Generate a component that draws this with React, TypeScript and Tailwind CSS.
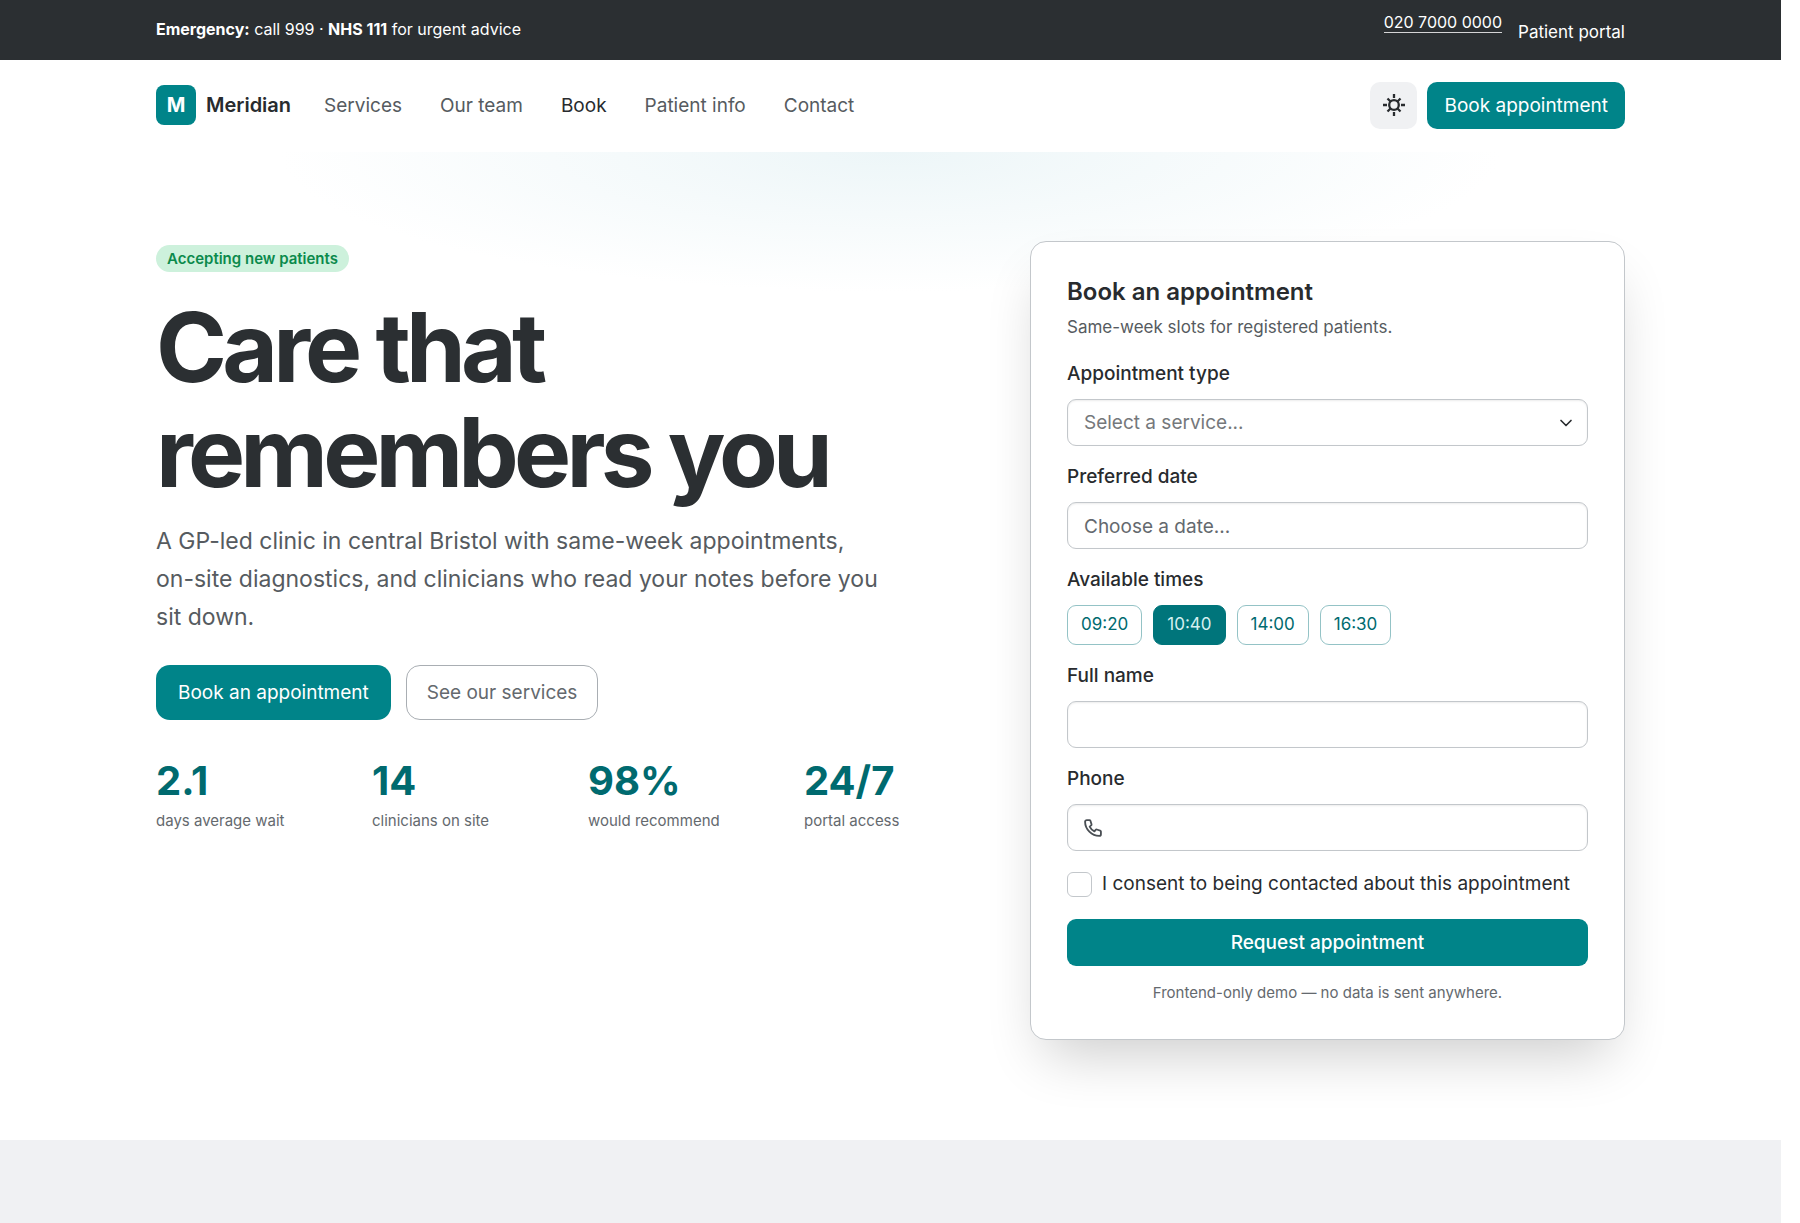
import { useState } from 'react';
import { ChevronDown } from 'lucide-react';

const NAV = ['Services', 'Our team', 'Book', 'Patient info', 'Contact'];
const TIMES = ['09:20', '10:40', '14:00', '16:30'];
const STATS = [
  { value: '2.1', label: 'days average wait' },
  { value: '14', label: 'clinicians on site' },
  { value: '98%', label: 'would recommend' },
  { value: '24/7', label: 'portal access' },
];

const FIELD =
  'h-[47px] w-full rounded-[9px] border border-[#c3c7cb] bg-white px-4 pt-[2px] text-[19px] shadow-[inset_0_1px_2px_rgba(0,0,0,0.08)] outline-none placeholder:text-[#64696e]';
const LABEL = 'block text-[19px] font-medium leading-[30px] text-[#282b2e]';

function SunIcon() {
  return (
    <svg viewBox="0 0 24 24" width="24" height="24" fill="none" stroke="currentColor" strokeWidth="2.3" aria-hidden="true">
      <circle cx="12" cy="12" r="4.8" />
      <path d="M12 1v4M12 19v4M1 12h4M19 12h4M5.500 5.500l3 3M15.500 15.500l3 3M18.500 5.500l-3 3M8.500 15.500l-3 3" />
    </svg>
  );
}

function PhoneIcon() {
  return (
    <svg viewBox="0 0 24 24" width="20" height="20" fill="none" stroke="currentColor" strokeWidth="2.2" strokeLinejoin="round" aria-hidden="true">
      <path d="M4.500 2.500h3.200a1.300 1.300 0 0 1 1.200.9l1.300 4a1.300 1.300 0 0 1-.4 1.400L8 10.300a12 12 0 0 0 5.700 5.700l1.500-1.800a1.300 1.300 0 0 1 1.400-.4l4 1.300a1.300 1.300 0 0 1 .9 1.200v3.200a2 2 0 0 1-2 2C10.500 21.500 2.500 13.500 2.500 4.500a2 2 0 0 1 2-2z" />
    </svg>
  );
}

function TopBar() {
  return (
    <div className="bg-[#2b2f32] text-white">
      <div className="mx-auto flex h-15 max-w-[1469px] items-center justify-between text-[16px]">
        <p className="pb-[2px]">
          <strong className="font-bold">Emergency:</strong> call 999 · <strong className="font-bold">NHS 111</strong> for urgent advice
        </p>
        <div className="flex h-9 items-start gap-4">
          <a href="tel:02070000000" className="border-b border-white/80 leading-5">020 7000 0000</a>
          <a href="#portal" className="text-[17px] leading-10">Patient portal</a>
        </div>
      </div>
    </div>
  );
}

function Header() {
  return (
    <header className="bg-white">
      <div className="mx-auto flex h-23 max-w-[1469px] items-center justify-between pb-[2px]">
        <div className="flex items-center gap-[33px]">
          <a href="#home" className="flex items-center gap-[10px] text-[20px] font-semibold text-[#282b2e]">
            <span className="flex size-10 items-center justify-center rounded-lg bg-[#008489] font-bold text-white">M</span>
            Meridian
          </a>
          <nav className="flex gap-[38px] pt-[2px] text-[19px]">
            {NAV.map((item) => (
              <a key={item} href="#nav" className={item === 'Book' ? 'text-[#282b2e]' : 'text-[#565b60]'}>{item}</a>
            ))}
          </nav>
        </div>
        <div className="flex items-center gap-[10px]">
          <button type="button" aria-label="Toggle theme" className="flex size-[47px] items-center justify-center rounded-[10px] bg-[#f0f1f3] text-[#282b2e]">
            <SunIcon />
          </button>
          <button type="button" className="h-[47px] rounded-[10px] bg-[#008489] px-[17px] pt-[2px] text-[19px] text-white">Book appointment</button>
        </div>
      </div>
    </header>
  );
}

function Intro() {
  return (
    <div className="pt-1">
      <span className="inline-block rounded-full bg-[#cdf1dc] px-[11px] text-[15px] font-semibold leading-[27px] text-[#0b8a4c]">Accepting new patients</span>
      <h1 className="mt-[23px] text-[96px] font-bold leading-[105px] tracking-tighter text-[#2b2f32]">
        Care that
        <br />
        remembers you
      </h1>
      <p className="mt-[17px] max-w-[726px] text-[23px] leading-[38px] text-[#565b60]">
        A GP-led clinic in central Bristol with same-week appointments, on-site diagnostics, and clinicians who read your notes before you sit down.
      </p>
      <div className="mt-[29px] flex gap-[15px]">
        <button type="button" className="h-[55px] rounded-[14px] bg-[#008489] px-[22px] pt-[2px] text-[19px] text-white">Book an appointment</button>
        <button type="button" className="h-[55px] rounded-[14px] border border-[#a9aeb3] bg-white px-5 pt-[2px] text-[19px] text-[#64696e]">See our services</button>
      </div>
      <dl className="mt-[35px] grid max-w-[846px] grid-cols-4 gap-[18px]">
        {STATS.map((s) => (
          <div key={s.label} className="flex flex-col-reverse gap-[2px]">
            <dt className="text-[15px] leading-6 text-[#64696e]">{s.label}</dt>
            <dd className="text-[40px] font-bold leading-[52px] text-[#006a6f]">{s.value}</dd>
          </div>
        ))}
      </dl>
    </div>
  );
}

function BookingCard() {
  const [time, setTime] = useState('10:40');

  return (
    <form
      onSubmit={(e) => e.preventDefault()}
      className="rounded-2xl border border-[#c3c7cb] bg-white px-9 pb-[34px] pt-9 shadow-[0_28px_56px_-14px_rgba(0,0,0,0.2)]"
    >
      <h2 className="text-[24px] font-semibold leading-[28px] text-[#282b2e]">Book an appointment</h2>
      <p className="mt-[6px] text-[17px] leading-[30px] text-[#565b60]">Same-week slots for registered patients.</p>

      <div className="mt-[17px] flex flex-col gap-4">
        <div>
          <label htmlFor="service" className={LABEL}>Appointment type</label>
          <div className="relative mt-[10px]">
            <select id="service" defaultValue="" className={`${FIELD} appearance-none text-[#75787b]`}>
              <option value="">Select a service...</option>
            </select>
            <ChevronDown size={20} className="pointer-events-none absolute right-3 top-[14px] text-[#282b2e]" />
          </div>
        </div>
        <div>
          <label htmlFor="date" className={LABEL}>Preferred date</label>
          <input id="date" type="text" placeholder="Choose a date..." className={`${FIELD} mt-[10px]`} />
        </div>
        <fieldset>
          <legend className={LABEL}>Available times</legend>
          <div className="mt-[10px] flex gap-[11px]">
            {TIMES.map((t) => (
              <button
                key={t}
                type="button"
                aria-pressed={t === time}
                onClick={() => setTime(t)}
                className={`h-10 rounded-[9px] border px-[13px] text-[17px] ${t === time ? 'border-[#00757b] bg-[#00757b] text-[#d5eff0]' : 'border-[#94c3c6] bg-white text-[#006a6f]'}`}
              >
                {t}
              </button>
            ))}
          </div>
        </fieldset>
        <div>
          <label htmlFor="name" className={LABEL}>Full name</label>
          <input id="name" type="text" className={`${FIELD} mt-[10px]`} />
        </div>
        <div>
          <label htmlFor="phone" className={LABEL}>Phone</label>
          <div className="relative mt-[10px]">
            <span className="pointer-events-none absolute left-4 top-[14px] text-[#4a4f54]"><PhoneIcon /></span>
            <input id="phone" type="tel" className={`${FIELD} pl-11`} />
          </div>
        </div>
      </div>

      <label className="mt-[18px] flex items-center gap-[10px] whitespace-nowrap text-[19px] leading-[30px] text-[#282b2e]">
        <input type="checkbox" className="size-[25px] appearance-none rounded-md border border-[#c3c7cb] bg-white" />
        I consent to being contacted about this appointment
      </label>
      <button type="submit" className="mt-5 h-[47px] w-full rounded-[9px] bg-[#008489] pt-[2px] text-[19px] font-medium text-white">Request appointment</button>
      <p className="mt-[15px] text-center text-[15px] leading-6 text-[#64696e]">Frontend-only demo — no data is sent anywhere.</p>
    </form>
  );
}

export default function App() {
  return (
    <div className="min-h-screen bg-white pr-[19px] font-['Inter',sans-serif]">
      <div className="flex min-h-screen flex-col">
        <TopBar />
        <Header />
        <main className="flex flex-1 flex-col">
          <section className="bg-[radial-gradient(ellipse_610px_140px_at_50%_0,#edf6f8,#ffffff)] pb-25 pt-[89px]">
            <div className="mx-auto grid max-w-[1469px] grid-cols-[minmax(0,1fr)_595px] gap-7">
              <Intro />
              <BookingCard />
            </div>
          </section>
          <section className="flex-1 bg-[#f0f1f3]" />
        </main>
      </div>
    </div>
  );
}
